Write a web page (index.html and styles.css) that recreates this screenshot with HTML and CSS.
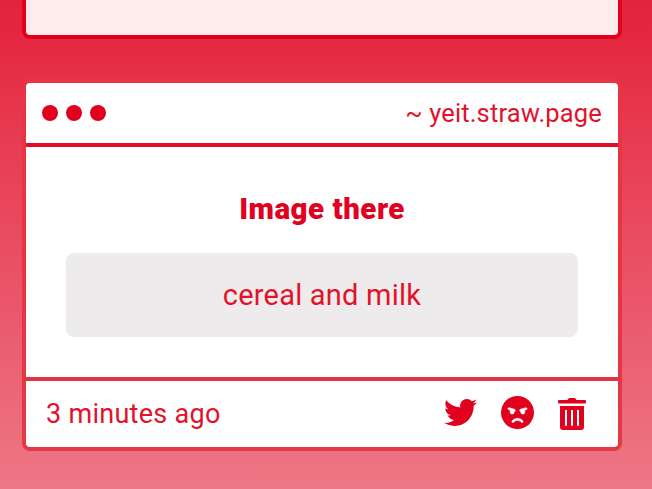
FILE: index.html
```
<!DOCTYPE html>
<html lang="en">
<head>
<meta charset="utf-8">
<title>Inbox</title>
<link rel="stylesheet" href="styles.css">
</head>
<body>
<main class="feed">
  <section class="card card-previous"></section>
  <article class="card message">
    <header class="card-header">
      <div class="dots"><span class="dot"></span><span class="dot"></span><span class="dot"></span></div>
      <span class="site">~ yeit.straw.page</span>
    </header>
    <div class="card-body">
      <h2 class="title">Image there</h2>
      <p class="answer"><span>cereal and milk</span></p>
    </div>
    <footer class="card-footer">
      <time class="time">3 minutes ago</time>
      <div class="actions">
        <svg class="icon twitter" viewBox="0 0 512 512"><path d="M459.37 151.716c.325 4.548.325 9.097.325 13.645 0 138.72-105.583 298.558-298.558 298.558-59.452 0-114.68-17.219-161.137-47.106 8.447.974 16.568 1.299 25.34 1.299 49.055 0 94.213-16.568 130.274-44.832-46.132-.975-84.792-31.188-98.112-72.772 6.498.974 12.995 1.624 19.818 1.624 9.421 0 18.843-1.3 27.614-3.573-48.081-9.747-84.143-51.98-84.143-102.985v-1.299c13.969 7.797 30.214 12.67 47.431 13.319-28.264-18.843-46.781-51.005-46.781-87.391 0-19.492 5.197-37.36 14.294-52.954 51.655 63.675 129.3 105.258 216.365 109.807-1.624-7.797-2.599-15.918-2.599-24.04 0-57.828 46.782-104.934 104.934-104.934 30.213 0 57.502 12.67 76.67 33.137 23.715-4.548 46.456-13.32 66.599-25.34-7.798 24.366-24.366 44.833-46.132 57.827 21.117-2.273 41.584-8.122 60.426-16.243-14.292 20.791-32.161 39.308-52.628 54.253z"/></svg>
        <svg class="icon angry" viewBox="0 0 496 496"><circle cx="248" cy="248" r="248"/><path class="face" d="M136 240c0-9.300 4.100-17.500 10.500-23.400l-31-9.300c-8.500-2.500-13.300-11.500-10.700-19.900 2.500-8.500 11.400-13.200 19.900-10.700l80 24c8.500 2.500 13.300 11.500 10.700 19.900-2.100 6.900-8.400 11.400-15.300 11.400-.5 0-1.100-.2-1.700-.2.700 2.700 1.700 5.300 1.700 8.200 0 17.700-14.300 32-32 32S136 257.700 136 240zm168 154.200c-27.800-33.400-84.200-33.400-112.100 0-13.500 16.300-38.200-4.200-24.600-20.500 20-24 49.400-37.700 80.600-37.700s60.600 13.800 80.600 37.700c13.800 16.500-11.100 36.500-24.500 20.500zm76.600-186.900l-31 9.300c6.300 5.800 10.500 14.100 10.500 23.400 0 17.700-14.300 32-32 32s-32-14.300-32-32c0-2.900.900-5.600 1.700-8.200-.6.100-1.100.2-1.700.2-6.900 0-13.200-4.500-15.300-11.400-2.500-8.500 2.300-17.400 10.700-19.900l80-24c8.400-2.500 17.400 2.300 19.900 10.700 2.500 8.500-2.300 17.400-10.800 19.900z"/></svg>
        <svg class="icon trash" viewBox="0 0 28 32"><path fill-rule="evenodd" d="M1 2H9.500L10.300.7Q10.700 0 11.500 0H16.500Q17.300 0 17.700.7L18.500 2H27Q28 2 28 3V4.500Q28 5.500 27 5.500H1Q0 5.500 0 4.500V3Q0 2 1 2zM2 8H26V29Q26 32 23 32H5Q2 32 2 29zM7 12V27.800H9V12zM13 12V27.800H15V12zM19 12V27.800H21V12z"/></svg>
      </div>
    </footer>
  </article>
</main>
</body>
</html>
```
FILE: styles.css
```
* { box-sizing: border-box; }
body {
  margin: 0;
  height: 489px;
  overflow: hidden;
  background: linear-gradient(180deg, #e3233d 0, #e52b43 60px, #e63349 90px, #e84258 180px, #ea566b 300px, #ec6a7a 410px, #ee7785 489px);
  font-family: Roboto, "Liberation Sans", sans-serif;
  color: #e2122b;
}
.feed {
  width: 600px;
  margin-left: 22px;
  display: flex;
  flex-direction: column;
  gap: 40px;
}
.card {
  border: 4px solid #e2001f;
  border-radius: 8px;
  background: #fff;
}
.card-previous {
  height: 39px;
  border-top: 0;
  border-radius: 0 0 8px 8px;
  background: #feecec;
}
.message {
  height: 372px;
  border-color: transparent;
  background:
    linear-gradient(#fff, #fff) padding-box,
    linear-gradient(#e83543, #ea3340 50%, #e13a46) border-box;
  display: flex;
  flex-direction: column;
}
.card-header {
  height: 64px;
  padding: 0 16px;
  border-bottom: 4px solid #e30d2b;
  display: flex;
  align-items: center;
  justify-content: space-between;
}
.dots { display: flex; gap: 8px; }
.dot {
  width: 16px;
  height: 16px;
  border-radius: 50%;
  background: #e2001f;
}
.site { font-size: 25.500px; letter-spacing: .15px; padding-bottom: 1px; }
.card-body {
  height: 230px;
  padding: 44px 40px 0;
  text-align: center;
}
.title {
  margin: 0;
  font-size: 29.500px;
  line-height: 36px;
  font-weight: 900;
  letter-spacing: .5px;
  color: #e2001f;
}
.answer {
  height: 84px;
  margin: 26px 0 0;
  border-radius: 8px;
  background: #edebec;
  font-size: 29px;
  line-height: 84px;
  letter-spacing: .22px;
}
.card-footer {
  height: 70px;
  padding: 0 32px 0 20px;
  border-top: 4px solid #e13542;
  display: flex;
  align-items: center;
  justify-content: space-between;
}
.time { font-size: 27px; letter-spacing: .28px; }
.actions { height: 34px; display: flex; align-items: flex-start; }
.icon { display: block; fill: #e2001f; }
.twitter { width: 33px; height: 33px; margin-top: -1px; }
.angry { width: 33px; height: 33px; margin: -1px 0 0 24.500px; }
.angry .face { fill: #fff; stroke: #fff; stroke-width: 8; }
.trash { width: 28px; height: 32px; margin: 1px 0 0 24px; }
```
